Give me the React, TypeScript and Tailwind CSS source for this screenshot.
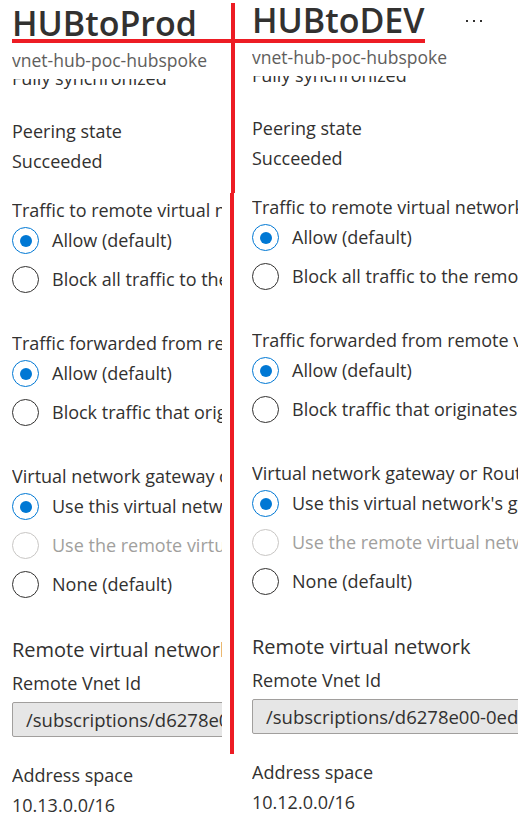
import React from "react"

type Opt = { label: string; checked?: boolean; disabled?: boolean }

type PanelData = {
  title: string
  titleSize: string
  menu?: boolean
  trafficTo: string
  blockTo: string
  trafficFwd: string
  blockFwd: string
  gateway: string
  useThis: string
  useRemote: string
  vnetId: string
  address: string
}

const font = { fontFamily: '"Open Sans", "Noto Sans", sans-serif' }

function Radio({ label, checked, disabled }: Opt) {
  return (
    <div className="h-[39px] flex items-center whitespace-nowrap">
      <div
        className={
          "shrink-0 w-[27px] h-[27px] rounded-full border-[1.5px] flex items-center justify-center " +
          (checked ? "border-[#0078d4]" : disabled ? "border-[#c8c6c4]" : "border-[#323130]")
        }
      >
        {checked && <div className="w-[12px] h-[12px] rounded-full bg-[#0078d4]" />}
      </div>
      <span className={"ml-[13px] text-[18px] " + (disabled ? "text-[#a19f9d]" : "text-[#323130]")}>{label}</span>
    </div>
  )
}

function Label({ children, className = "" }: { children: React.ReactNode; className?: string }) {
  return <div className={"h-[22px] flex items-center whitespace-nowrap text-[18px] text-[#323130] " + className}>{children}</div>
}

function Panel({ d }: { d: PanelData }) {
  return (
    <div className="overflow-hidden" style={font}>
      {/* header */}
      <div className="h-[46px] pt-[3px] flex items-start whitespace-nowrap">
        <h1 className={d.titleSize + " leading-[40px] font-semibold text-[#323130]"}>{d.title}</h1>
        {d.menu && (
          <div className="ml-auto mr-[36px] mt-[20px] flex gap-[5px]">
            <span className="w-[2px] h-[2px] bg-[#323130]" />
            <span className="w-[2px] h-[2px] bg-[#323130]" />
            <span className="w-[2px] h-[2px] bg-[#323130]" />
          </div>
        )}
      </div>
      <div className="h-[28px] flex items-center whitespace-nowrap text-[17.5px] text-[#605e5c]">vnet-hub-poc-hubspoke</div>
      <div className="h-[5px]" />
      {/* scrolled under header */}
      <div className="h-[13px] overflow-hidden">
        <div className="-mt-[13px] leading-[24px] text-[18px] text-[#323130] whitespace-nowrap">Fully synchronized</div>
      </div>

      <Label className="mt-[24px] h-[30px]">Peering state</Label>
      <Label className="h-[30px]">Succeeded</Label>

      <Label className="mt-[23px]">{d.trafficTo}</Label>
      <Radio label="Allow (default)" checked />
      <Radio label={d.blockTo} />

      <Label className="mt-[33px]">{d.trafficFwd}</Label>
      <Radio label="Allow (default)" checked />
      <Radio label={d.blockFwd} />

      <Label className="mt-[33px]">{d.gateway}</Label>
      <Radio label={d.useThis} checked />
      <Radio label={d.useRemote} disabled />
      <Radio label="None (default)" />

      <div className="mt-[34px] h-[24px] flex items-center whitespace-nowrap text-[20px] text-[#323130]">Remote virtual network</div>
      <Label className="mt-[10px]">Remote Vnet Id</Label>
      <div className="mt-[8px] h-[35px] w-[300px] flex items-center pl-[13px] bg-[#e6e6e6] border border-[#a19f9d] rounded-[2px] whitespace-nowrap text-[18.5px] text-[#323130]">
        {d.vnetId}
      </div>
      <Label className="mt-[27px]">Address space</Label>
      <Label className="mt-[8px]">{d.address}</Label>
    </div>
  )
}

const prod: PanelData = {
  title: "HUBtoProd",
  titleSize: "text-[34px]",
  trafficTo: "Traffic to remote virtual network",
  blockTo: "Block all traffic to the remote virtual network",
  trafficFwd: "Traffic forwarded from remote virtual network",
  blockFwd: "Block traffic that originates from outside this virtual network",
  gateway: "Virtual network gateway or Route Server",
  useThis: "Use this virtual network's gateway or Route Server",
  useRemote: "Use the remote virtual network's gateway or Route Server",
  vnetId: "/subscriptions/d6278e00-0ed0-4c6b-a6f2-0d0e1f2a3b4c",
  address: "10.13.0.0/16",
}

const dev: PanelData = { ...prod, title: "HUBtoDEV", titleSize: "text-[34px]", menu: true, address: "10.12.0.0/16" }

export default function App() {
  return (
    <div className="relative w-[531px] h-[822px] overflow-hidden bg-white flex">
      <div className="w-[230px] shrink-0 pl-[12px] pr-[8px]">
        <Panel d={prod} />
      </div>

      {/* annotation divider */}
      <div className="w-[5px] shrink-0 flex flex-col">
        <div className="ml-[1px] mt-[3px] w-[4px] h-[190px] bg-[#ed1c24]" />
        <div className="w-[4px] h-[372px] bg-[#ed1c24]" />
        <div className="w-[4px] h-[189px] bg-[#ed1c24]" />
      </div>

      <div className="flex-1 min-w-0 pl-[17px] pr-[13px] -mt-[3px]">
        <Panel d={dev} />
      </div>

      {/* annotation underline */}
      <div className="absolute left-[12px] top-[39px] w-[413px] h-[4px] bg-[#ed1c24]" />
    </div>
  )
}
